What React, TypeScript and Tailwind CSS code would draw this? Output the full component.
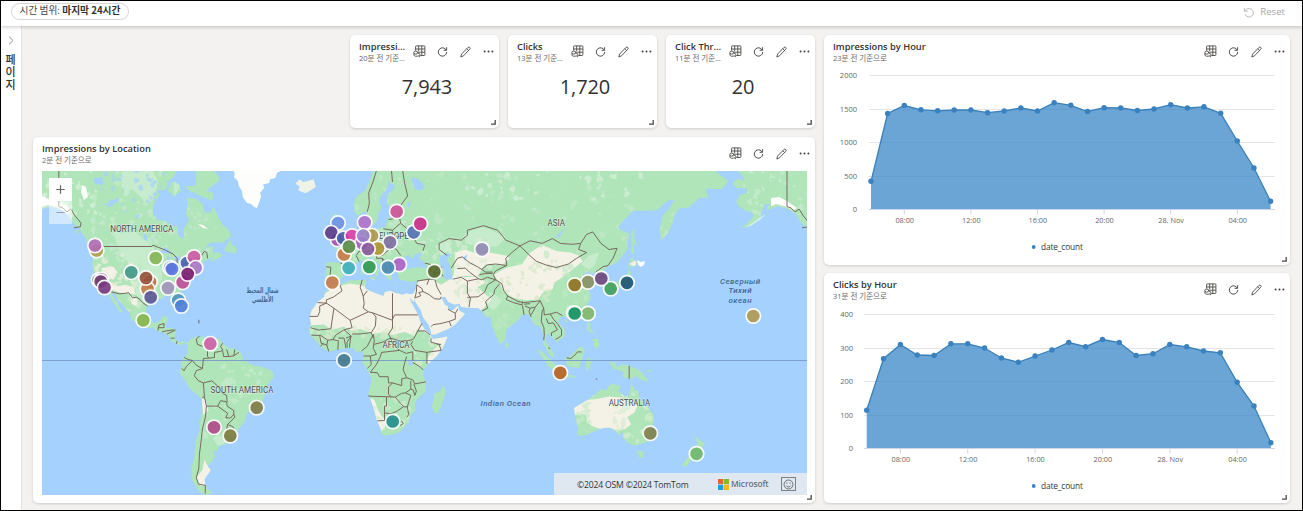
import React from "react";

/* ---------- shared icons ---------- */

function TableSearchIcon() {
  return (
    <svg width="13" height="13" viewBox="0 0 13 13" fill="none" stroke="#4a4846" strokeWidth="0.9">
      <path d="M2.6 5.6V1.6a.7.7 0 0 1 .7-.7h7.9a.7.7 0 0 1 .7.7v8a.9.9 0 0 1-.9.9H7.4" />
      <path d="M2.6 4h9.3M4 7.2h7.9M5.7.9v5.2M8.8.9v9.6" />
      <ellipse cx="2.7" cy="7.6" rx="1.9" ry="1.5" />
      <path d="M1 8v2c0 .8.8 1.2 1.8 1.2h2M4.6 7.8 7 9.2l-.4 2.6-1.8-1.4" />
    </svg>
  );
}

function RefreshIcon() {
  return (
    <svg width="11" height="11" viewBox="0 0 11 11" fill="none" stroke="#4a4846" strokeWidth="0.95">
      <path d="M9.3 4.2A4.2 4.2 0 1 0 9.7 6" />
      <path d="M9.6 1.2v3.1H6.6" />
    </svg>
  );
}

function PencilIcon() {
  return (
    <svg width="11" height="12" viewBox="0 0 11 12" fill="none" stroke="#4a4846" strokeWidth="0.9" strokeLinejoin="round">
      <path d="M7.9 1.5a1.25 1.25 0 0 1 1.8 0 1.25 1.25 0 0 1 0 1.8L3.4 9.9.8 11l.8-2.9z" />
      <path d="M6.8 2.7 8.6 4.5" />
    </svg>
  );
}

function MoreIcon() {
  return (
    <svg width="11" height="3" viewBox="0 0 11 3" fill="#3b3a39">
      <circle cx="1.6" cy="1.5" r="0.95" />
      <circle cx="5.5" cy="1.5" r="0.95" />
      <circle cx="9.4" cy="1.5" r="0.95" />
    </svg>
  );
}

function Tools() {
  return (
    <div className="flex h-[13px] shrink-0 items-center">
      <TableSearchIcon />
      <span className="ml-[11px]"><RefreshIcon /></span>
      <span className="ml-[12px]"><PencilIcon /></span>
      <span className="ml-[12px] flex"><MoreIcon /></span>
    </div>
  );
}

function Card({ title, note, className, children }: { title: string; note: string; className: string; children: React.ReactNode }) {
  return (
    <section className={"relative flex flex-col overflow-hidden rounded-[5px] bg-white shadow-[0_1px_3px_rgba(0,0,0,0.16)] " + className}>
      <header className="flex h-[34px] shrink-0 items-start justify-between pl-[9px] pr-[5px] pt-[5px]">
        <div className="min-w-0 flex-1 pr-[6px]">
          <h2 className="truncate font-['Open_Sans','Noto_Sans_CJK_KR',sans-serif] text-[9.3px] font-semibold leading-[13px] text-[#323130]">{title}</h2>
          <p className="truncate font-['Open_Sans','Noto_Sans_CJK_KR',sans-serif] text-[7.5px] leading-[11px] text-[#6a6866]">{note}</p>
        </div>
        <div className="pt-[5px]"><Tools /></div>
      </header>
      {children}
      <svg className="absolute bottom-[3px] right-[3px]" width="5" height="5" viewBox="0 0 5 5" fill="none" stroke="#4a4846" strokeWidth="1.3">
        <path d="M0 4.2h4.2V0" />
      </svg>
    </section>
  );
}

function Metric({ title, note, value }: { title: string; note: string; value: string }) {
  return (
    <Card title={title} note={note} className="h-[93px] w-[149px]">
      <div className="flex h-[35px] items-center justify-center pl-[5px] font-['Open_Sans',sans-serif] text-[20px] tracking-[-0.1px] text-[#323130]">{value}</div>
    </Card>
  );
}

/* ---------- area charts ---------- */

type ChartData = {
  top: number;
  x0: number;
  step: number;
  gridX: number;
  labelX: number;
  grid: [number, string][];
  points: number[];
};

const impressions: ChartData = {
  top: 69, x0: 871, step: 16.65, gridX: 869, labelX: 857,
  grid: [[75.5, "2000"], [109.5, "1500"], [142.5, "1000"], [176.5, "500"], [209.5, "0"]],
  points: [181.3, 113.5, 105.5, 109.8, 110.8, 110, 110, 112.7, 111, 108, 111, 102.7, 105.3, 111.5, 107.7, 108, 110.5, 109, 104.7, 108, 106.8, 113.3, 141, 168, 201.3],
};

const clicks: ChartData = {
  top: 307, x0: 866.7, step: 16.84, gridX: 864, labelX: 853,
  grid: [[314.5, "400"], [348.5, "300"], [381.5, "200"], [415.5, "100"], [448.5, "0"]],
  points: [410.3, 358.7, 344.5, 355, 355.5, 343.8, 343.8, 348, 358, 362.3, 356, 350, 342.5, 346.7, 339.5, 342.5, 355.5, 353.7, 344.5, 346.8, 351, 352.8, 382.3, 406, 442.7],
};

const hours = ["08:00", "12:00", "16:00", "20:00", "28. Nov", "04:00"];

function AreaChart({ data }: { data: ChartData }) {
  const pts = data.points.map((y, i) => [data.x0 + i * data.step, y]);
  const line = pts.map((p) => p[0].toFixed(1) + "," + p[1]).join(" ");
  const base = data.grid[4][0];
  const legendY = base + 37.5;
  return (
    <svg width="466" height="190" viewBox={`824 ${data.top} 466 190`} className="block font-['Open_Sans',sans-serif]">
      {data.grid.map(([y, label]) => (
        <g key={label}>
          <path d={`M${data.gridX} ${y}H1275`} stroke="#e4e4e6" strokeWidth="1" />
          <text x={data.labelX} y={y + 2.7} fontSize="7.5" fill="#666" textAnchor="end">{label}</text>
        </g>
      ))}
      <polygon points={`${pts[0][0]},${base} ${line} ${pts[24][0]},${base}`} fill="#3a87c8" fillOpacity="0.75" />
      <path d={`M${data.gridX} ${base}H1275`} stroke="#ccd6eb" strokeWidth="1" />
      <polyline points={line} fill="none" stroke="#3a80b8" strokeWidth="1.3" />
      {pts.map(([x, y]) => <circle key={x} cx={x} cy={y} r="2.7" fill="#3a82bf" />)}
      {hours.map((h, i) => {
        const x = data.x0 + (2 + 4 * i) * data.step;
        return (
          <g key={h}>
            <path d={`M${x} ${base}v5`} stroke="#ccd6eb" strokeWidth="1" />
            <text x={x + 0.4} y={base + 13} fontSize="7.3" fill="#666" textAnchor="middle">{h}</text>
          </g>
        );
      })}
      <circle cx="1033.7" cy={legendY} r="1.9" fill="#3a82bf" />
      <text x="1041" y={legendY + 2.9} fontSize="8.3" fill="#333" textLength="42">date_count</text>
    </svg>
  );
}

/* ---------- world map (Web Mercator) ---------- */

const K = 115.9;
function project(lon: number, lat: number): [number, number] {
  const y = Math.log(Math.tan(Math.PI / 4 + (lat * Math.PI) / 360));
  return [344 + (lon * K * Math.PI) / 180, 360.5 - K * y];
}
function trace(coords: string, shift = 0): string {
  return coords
    .trim()
    .split(/\s+/)
    .map((pair) => {
      const [a, b] = pair.split(",").map(Number);
      const [x, y] = project(a + shift, b);
      return x.toFixed(1) + "," + y.toFixed(1);
    })
    .join(" ");
}

const northAmerica =
  "-166,68.3 -163,67 -162,66 -165,66.5 -168,65.6 -166,64.5 -161,64.5 -161,63.5 -164.5,63 -166,61.5 -165,60.5 -162,59.5 -158.5,58.8 -157.5,58.5 -158,57.5 -161,55.8 -164.8,54.6 -162,55 -158,56 -154,58 -153.5,59.3 -151.8,60.8 -149.5,61 -151.5,59.2 -148,60 -145,60.4 -142,60 -139.5,59.5 -137,58.5 -135,57 -133,55.5 -130.5,54.5 -130,53.5 -128,51.8 -127,50.8 -124.5,49.6 -123,49 -122.5,47.5 -124.6,48.3 -124,46 -124.5,43 -124,40.5 -123.7,39 -122.5,37.5 -121.8,36.3 -120.6,34.6 -118.4,33.8 -117.2,32.6 -116,30.5 -114.2,28 -115,27.7 -113,26.5 -112,24.7 -110,22.9 -109.5,23.4 -111,25.5 -112.5,28 -114.7,31 -114.5,31.8 -113,31 -112,29 -110.5,27.5 -109,26 -108,25 -106,23 -105.3,21.5 -105.5,20.3 -104,19 -102,18 -99,16.6 -96.5,15.7 -94.5,16.2 -92.3,14.5 -90,13.7 -87.7,13 -86,11.3 -85.7,10 -83.7,8.7 -82.9,8.2 -81,7.6 -80,7.5 -79.5,8.9 -78.2,8 -77.5,8.6 -79.5,9.5 -81,8.8 -83,9.8 -83.7,11 -83.5,13 -83.2,15 -85,15.9 -88,15.8 -88.5,17 -87.5,19 -87,21.4 -90,21.2 -90.6,19.5 -92,18.6 -94.5,18.2 -96,19.2 -97.5,21.5 -97.8,24 -97.2,26 -97,28 -95,29 -93,29.7 -90.5,29.1 -89,29.2 -89.5,30.3 -86.5,30.4 -84.3,30 -82.8,28.8 -82.6,27.5 -81.7,25.9 -80.3,25.3 -80,27 -81.2,29.5 -81.2,31.5 -79.5,33 -77.5,34.2 -75.7,35.3 -76,37 -75,38.5 -74,40 -72,41.1 -70,41.7 -70.7,43 -69,44 -67,44.7 -65,45.4 -66,43.6 -63.5,44.6 -61,45.4 -60,46 -61.5,46.8 -64.5,47 -65,48 -64.3,49 -67,49 -70,47 -67,49.8 -65,50.3 -60,50.2 -57,51.5 -55.8,52.5 -57.5,54.5 -60,55.5 -62,57.5 -64.5,60.3 -66,58.8 -69,58.8 -70,61 -73,62.2 -77.8,62.4 -77.5,60 -78.4,58.5 -76.6,57 -78.5,55 -79.5,54.5 -79,52 -80,51.2 -82.2,53 -82.3,55 -85,55.3 -88,56.5 -92.5,57 -94.7,58.8 -94,61 -91,63 -93,64 -88,64.2 -86.5,66 -84,67 -82,68.5 -82,69.5 -85,69.5 -88,68 -92,69 -96,68 -100,67.9 -108,68 -115,68 -122,70 -141,70 -156,71";

const land: string[] = [
  "-65,61.8 -71,62.8 -77.5,64.3 -78,65 -73.5,65 -73,67.5 -76,69 -68,70 -67,69 -62,67 -61.5,66 -65,65 -68,64 -64.5,63.5",
  "-87,64 -84,62.7 -80.5,64 -82,65.5 -85.5,65.8",
  "-59.3,47.7 -57,50.5 -55.5,51.5 -56,50 -53,48.5 -53.5,46.7 -56,47",
  "-128,50.8 -125,50 -123.5,48.5 -126,49.3",
  "-133,54 -131.5,54 -131.5,52.5",
  "-77.5,8.6 -75.5,10.7 -74,11.2 -72,12.2 -71.5,10.8 -70,12 -68,10.7 -64,10.3 -62,10.7 -60,8.5 -57,6 -54,5.8 -51.5,4.3 -50,1.8 -50,0 -48,-.7 -44.5,-2.5 -41.5,-3 -38.5,-3.8 -35.3,-5.2 -34.8,-8 -37,-11 -39,-13.5 -39.2,-17.5 -40.8,-21 -42,-23 -45,-23.6 -48.5,-25.5 -48.8,-28.5 -51,-31 -53.5,-34 -56,-34.9 -58.4,-34 -57,-36.3 -58,-38 -62,-39 -62.3,-40.8 -65,-41 -63.7,-42.5 -65.3,-44.8 -67.5,-46 -65.8,-47.5 -69,-50.5 -68.4,-52.4 -65.2,-54.7 -68.5,-55.3 -72,-54 -75,-51 -75.5,-47 -74,-43 -73.5,-39 -73.5,-37 -71.7,-33 -71.5,-30 -70.3,-25 -70.2,-19 -71.5,-17.5 -76.2,-14 -78.5,-10 -81.2,-6 -81.3,-4.5 -80,-3 -81,-2 -80,0.5 -78.8,1.7 -77.3,4 -77.5,6.5",
  "20,70 14.5,68 12.5,66 10.5,64 6,62.5 5,61 5.3,59 7,58 10.5,59.2 11.5,58.5 12.8,56 14.2,55.5 16.3,56.5 17,58.8 18.8,60 17.3,61.5 18,62.7 21.5,64.5 22,65.8 25,65.2 25,64.5 21.5,63 21.3,61 23,60 28,60.6 30,60 28,59.6 23.5,59.2 24,57.5 22,57.6 21,56 20,54.7 18.5,54.8 14.2,54 11,54 10.7,57.6 8.2,57 8.6,54 5,53.3 3.3,51.3 1.6,50.5 0,49.5 -1.8,49.6 -2,48.7 -4.7,48.4 -2,47 -1.2,44.5 -1.8,43.4 -8,43.7 -9.2,43 -8.8,40 -9.4,38.7 -8.9,37 -6.5,36.9 -5.5,36.1 -2,36.8 -0.5,38 0,39.5 3.2,41.8 3.2,43.2 6,43.1 8.8,44.4 10.3,43 12.3,41.7 15,40 16,38 17,39 16.8,40.5 18.4,40 16,41.8 13.5,43.6 12.3,45.3 13.8,45.2 15.5,43.8 19.4,41.8 19.5,40 21.5,37.5 23,36.6 24,38 22.8,40 24,40.6 26,40.8 26.5,39.5 27.3,37 30.5,36.5 34,36.2 36,36.7 35.8,34 34.3,31.3 32.5,31.1 31,31.5 29,30.9 25,31.7 23,32.6 20.2,32 19.5,30.3 15.5,31.5 11,33.2 10.2,34.3 11,37 8,36.9 3,36.8 -1.5,35.2 -5.5,35.8 -7,33.8 -9.6,32 -9.7,30 -13,27.7 -16,24 -17,21 -16.3,18 -17.4,14.7 -16.7,12.5 -13.3,9 -12,7.2 -7.7,4.4 -4,5.2 1,6 4.3,6.3 6,4.3 8.7,4.6 9.7,3 9.3,0 9,-1 12,-5 13.7,-10 12,-16 14.5,-22.5 16.3,-28.5 18.2,-32 18.4,-34 20,-34.8 25.7,-34 28,-33 32,-29 32.8,-26 35.5,-24 35,-20.5 37,-18 40.6,-15 40.5,-10.5 39,-7 39.5,-4.5 41.5,-1.8 46,2.3 49,6.5 51.2,11.8 48,11.2 44,10.5 43,12 40,15 38,18 37,21 35.5,24 33,28 32.5,29.8 34.3,27.8 35,29.3 35,28.2 38,24 39,21 42,17 43.3,12.7 45,12.8 52,15.6 55,17.5 58,20.5 59.8,22.5 57,24 56.3,26.2 54,24.2 51.5,24.2 51.3,26 50,26.5 48,29.8 50,30 51.5,27.8 54.5,26.6 57,27 58,25.5 61.5,25.2 66.5,25 68.5,23.3 70,21 72.5,21 73,17 74.8,13 76.3,9.5 77.5,8.1 79.8,10.3 80.2,15 82.5,16.8 86.5,20 88,21.8 91,22.5 92.3,20.5 94.3,17 97,16.8 98.5,13 98.5,8.5 100.3,5.5 101.5,2.7 103.8,1.3 103.4,4 101.8,6.8 99.5,9.5 100.2,13.3 102.5,12 105,9 106.8,10.3 109.3,12 108.8,15.3 106,18.5 107,21 110,21.3 114,22.4 117,23.7 119.8,26 121.8,29 121.8,31 120,34 119.3,35 122.5,37 119,37.3 117.8,39 121.8,40.5 121.5,39 124.5,40 125,38 126.5,36.5 126.5,34.5 129.3,35.5 129.3,37 127.5,39.5 130,42 135,43.5 140,48 140.5,51 141,53 137,54 135.3,54.8 138,56.5 143,59.3 151,59.3 155,59.5 160,61.7 163.5,62 161,60 157.5,58 156,54 156.7,51 160,53 162.5,56 163.3,58 166,60 170,60 176,62.4 180,62.4 179,64.5 183,64.3 187,64.4 190,66 185,67.5 180,69 178,70",
  "-5.5,50 1.3,51.2 1.6,52.8 0,53.5 -2,56 -2,57.6 -5,58.6 -6,56.5 -3,54.5 -4.5,53 -5,52 -3,51.5",
  "-10,52 -6.3,52.2 -6,54 -7.5,55.3 -10,54",
  "8.3,39 9.7,39.2 9.5,42.8 8.5,42",
  "12.5,38 15.5,38.2 15,36.7",
  "23.5,35.5 26.3,35.2 25,34.9",
  "32.5,35 34.4,35.6 33.5,34.7",
  "49.3,-12 50.4,-15.5 48,-22 46.8,-25.2 44.5,-25 43.4,-22 44.3,-19.5 44.4,-16.3 47.5,-15",
  "79.8,9.6 81.8,7.5 80.5,6 79.8,7.5",
  "95.3,5.6 98,4.3 101,1.5 104,-1.5 106,-3.5 105.7,-5.9 102,-4 99,0 97,3",
  "105.3,-6.5 108.5,-6.7 114.5,-7.6 114.3,-8.6 108,-7.8",
  "109,1.6 111,1.5 114.5,4.8 117,7 119,5.2 117.8,1 116,-3.8 113,-3.2 110.3,-2.8",
  "119.5,0 120.5,1 125,1.5 121,.4 123,-1 121.5,-2 122.5,-4.8 121,-3 120.3,-5.5 119.4,-3.5",
  "120.5,18.5 122.2,18.3 121.6,15.8 124,12.7 122,13.8 120,14.8",
  "122,10 125.5,11 126.4,7.5 125,5.8 123,7.8 124,9",
  "131,-1 134,-.8 135,-3.3 138,-1.6 144.5,-3.9 147.8,-6.2 150.8,-10.5 147,-9.5 144,-7.7 142.5,-9.2 138,-8.3 138,-5.5 133,-4 132,-2.5",
  "149,-5.6 152,-4.2 151.5,-5.6",
  "113.7,-22.8 114.2,-26 115.8,-32 115,-34.3 118,-35 124,-33 128,-31.6 131.5,-31.5 134.5,-33 136,-34.8 137.7,-33 138.2,-35.6 140,-37.5 143.5,-38.8 147,-38 150,-37.3 151.3,-33.5 153.3,-29 153,-25.5 150.8,-23.3 149,-20.5 146.3,-18.9 145.3,-15 143.5,-14.2 142.3,-10.8 141.5,-13.5 140.8,-17.4 139,-17.4 135.7,-15 136.8,-12.2 133,-11.6 131,-12.2 129.5,-14.8 127,-14 124.5,-16.3 122.2,-18 119,-20",
  "144.8,-40.8 148.2,-40.9 147.8,-43.2 146,-43.4",
  "172.7,-34.5 175.5,-36.5 178.5,-37.8 177,-39.5 175.3,-41.6 173.8,-39.3 174.8,-37.5",
  "172.7,-40.7 174.2,-41.8 171,-44.7 169,-46.5 166.6,-46 170,-43.2",
  "130,33 132,33.8 136,33.6 139,35 140.8,35.7 141.8,39.5 140.8,41.4 139.8,39 137,37 133,35.6 131,34.5 130,31.5",
  "140.2,41.6 143.2,42 145.3,43.4 141.9,45.4 141,43.3",
  "142,46.5 143.5,46.8 142.8,50 144.5,49 143,54.2 142,53.5",
  "120.2,23 121.8,25.2 121,22.2",
  "108.7,19.2 110.8,20 110,18.3",
];

const greenland = "-43,60 -44.5,60.2 -46,61 -48,61.2 -50,62.5 -50.5,64 -52,65 -52.5,66 -54.5,66.8 -54,67.3 -56,70 -22,70 -26,68.5 -30,68.2 -33,67.6 -34,66.6 -36.5,66.4 -37,65.6 -40,65.3 -39.5,64.6 -41.5,63.5 -41,62.6";
const iceland = "-22.5,64 -19,63.4 -16,64.2 -14,64.8 -15,66.3 -18,66 -20,65.8 -22,66.3 -24,65.5 -22,64.9";

const water: string[] = [
  "28,42 31,41.2 36,41.8 41.5,41.5 39,44 37,45 39,47 35,46.3 33.5,44.8 32,46.2 30,45.5 28.5,43.5",
  "47.5,45.5 47.7,42.5 50,40 49,37.5 53.8,37 53,40 52.5,42 51,44.5 53,46.7 49.5,46.5",
  "33,66.8 35,64.3 38,64 40,65 37,66.3",
  "103.8,51.5 107,52.2 109.8,55.5 108,54",
  "-92,46.7 -88,48.8 -84.8,46.6 -88,46.8",
  "-87.8,42 -87.5,45 -86,45.8 -86.3,42",
  "-84,46 -80.5,45.5 -82,43.3 -83.5,44",
  "-83,41.8 -79,42.8 -81.5,41.6",
  "-99,53.5 -97.5,52 -97,50.5 -98.8,51.5",
  "-117,61 -111,62.5 -112,61.3",
  "-124,66.5 -119,66.8 -120,65.3 -123,65.4",
  "-103,58 -101,58.5 -102,57",
  "-108,59.5 -110.5,59 -107,59.2",
  "31.8,.3 34,.2 33.8,-2.5 32,-2.4",
  "59,45.5 61,46.3 60,44",
  "31,61 33,61.5 32,59.9",
];

const deserts: string[] = [
  "-18,29 -10,31 -5,34 3,35.5 10,34.5 12,38 20,35 35,33 37,36.5 44,37 48,35 52,37 54,38.5 60,38 66,38.5 70,36 66,34 70,31 73,29 69,25 60,20 52,12 44,11 39,14.5 36,15 35,12 30,14 24,12.5 20,14 14,13 8,15.5 4,14.5 0,16.5 -6,15 -10,17.5 -18,17",
  "42,11 52,13 51,5 42,-2.5 40.5,0 43,4 47,8 43,9",
  "54.5,41 55,47 60,48 66,46.5 72,47 80,46 82,45 78,42.5 70,43 66,38.5 60,38.5 54,38",
  "74,39 80,41.5 88,43 92,47 98,49.5 105,47.5 112,47 116,46 118,44 113,41 108,38 104,36 103,33 99,32.5 96,29 90,28.5 84,29.5 79,32 77,35.5",
  "12,-18 15,-19 17,-24 19,-27 21,-28 20,-32 18,-33 14,-28",
  "-73,-50 -70,-47.5 -69,-44 -67.5,-46 -65.5,-48 -69,-52.5 -71,-52.5",
  "-70.5,-17.5 -68,-20 -67,-24 -69.5,-26",
  "113.5,-22 116,-20.5 121,-19 126,-18.5 131,-17.5 137,-18 141,-21 142,-19 145,-22 143.5,-25 140,-27 142,-30 139,-32 135,-32.5 131,-31.5 127,-32 123,-31 120,-29 120,-26 117,-25.5 114,-26",
  "-120,41.5 -114,42 -112,40 -114,37 -117,38 -119,39",
  "-117,36 -112,34.5 -108,35 -104,34 -103,31 -107,31.5 -110,31.5 -115,33",
  "-106,31 -102,29 -102,25.5 -105,27",
  "141,43 144.5,44.5 144,42",
];

const paleAreas: string[] = [
  "-114,54 -110,53 -103,53.5 -97,50 -94,48.5 -92,44 -90,41 -90,37 -97,33 -99,28 -103,31 -103,36 -105,41 -108,45 -112,49",
  "-110,64.5 -104,64 -97,61 -94,62 -92,66 -96,69 -110,69",
  "-152,62 -148,63.5 -146,61.5 -140,62.5 -136,60 -140,59 -150,59",
  "60,53 68,55 75,53.5 80,52 76,49 68,49 60,50",
  "45,49 50,51 53,48.5 48,46",
  "72,32 75,31 78,28 74,24 71,26",
  "117,43 121,46 126,47 124,42.5 121,41",
  "-62,-34 -58,-37.5 -62,-39 -65,-36",
];

const borders: string[] = [
  "-123,49 -95,49 -94.5,49.4 -89,48 -84.5,46.5 -82.5,45 -82.5,42 -79,43 -76.5,44 -75,45 -71,45 -70,46.5 -69,47.4 -67.8,47 -67.5,45",
  "-117,32.5 -111,31.3 -108,31.5 -106.5,31.8 -104.5,29.6 -102.5,29.8 -101,29 -99.5,27.5 -97.2,26",
  "-92,14.6 -91.5,17.3 -89,18 -89,16 -92,16 M -90,14 -88,14.5 -84,15 M -87.5,13 -84,14.5 -83.2,15 M -85.7,11 -83.7,11 M -82.9,8.2 -82.5,9.5 M -71.8,19.7 -71.7,18",
  "-71.5,12 -73,10.5 -72.5,8 -70,7 -67.5,6 -67.5,2 -66.8,1.2 -64,1.5 -64,4 -61,4.5 -60,5.2 -61,7 -60,8.5",
  "-60,5 -59.5,2 -57,2 -58,5.5 M -57,2 -54.5,2.3 -52,4 M -54.5,2.3 -54,5.5",
  "-66.8,1.2 -69.5,1 -70,-4 -73,-2.3 -75,0 -77,0.5 -79,1.5",
  "-75,0 -78,-3 -79,-5 -80.3,-4",
  "-70,-4 -73,-5 -74,-7.5 -72,-10 -69.5,-11 -69,-17.5 -70.3,-18.3",
  "-69.5,-11 -65.3,-10 -62,-13 -60,-16 -58,-17 -57.8,-20",
  "-69,-17.5 -68,-22 -68.5,-27 -70,-32 -70.5,-36 -71.5,-42 -71.8,-47 -73,-50 -72,-52 -68.5,-52.4 -68.6,-54.8",
  "-68,-22 -65,-22 -62.5,-22 -61,-19.5 -58,-20 -57.8,-22 -54.5,-24 -54.5,-25.6 -56,-27.3 -58.5,-27.3 -57.5,-25.3 -62.5,-22",
  "-54.5,-25.6 -54,-27 -57.6,-30.2 -58.2,-33 M -57.6,-30.2 -55,-31 -53.5,-33.5",
  "11.5,59 12.5,61 12.2,63.5 14.5,66 16,68 20,69 M 24,65.8 23.5,68 21,69 M 30,70 29,68 30,65.5 31.5,62.8 28,60.6",
  "28,59.5 27.5,57.5 28,56 31,54.5 31.5,53 34,52 36,50 40,49.5 39,47.5 M 27.5,57.5 22,57 M 28,56 24,54 19.5,54.4 M 24,54 23.5,52 24,50.5 22.5,49 26,48 28,46 M 23.5,51.7 31.5,52.5",
  "14.3,54 15,51 12.5,50 13.8,48.7 17,48.5 22.5,49 M 15,51 18.5,49.8 22.5,49 M 6.5,53.3 6,50 8,49 7.6,47.5 10,47.4 13,47.5 13.8,48.7 M 3,51 6,49.5 M 7.6,47.5 6,46 7.5,43.8 M 13,46.5 16.5,46.5 19,46 22,47.8 M 16.5,46.5 16,45 19,45 20.5,44 22.5,43.5 28,43.8 M 22.5,43.5 23,41.5 26,41.5 M 19,45 19.5,43 21,41 20,39.8",
  "-8.8,42 -6.5,41.8 -7,38 -7.3,37.2 M -1.8,43.3 3,42.4",
  "41.5,41.6 43.5,40.5 44.5,39.8 46.5,41.8 48.5,41.8 M 44.5,39.8 48,39.5 49,38.4 M 36,36.5 42,37.3 44.8,37.2 44.5,39.8 M 40,43.3 44,42.6 47.8,41.5",
  "51,46 47,48 47,50 52,51.5 58,51 61,52.5 61,54 69,55.3 76,54 80,51 87,49.2 92,50.8 98,50 103,51.5 107,50 113,49.7 117,50 120,52.8 123,53.5 127,50 131,48 135,48.4 133,45 131,43 130.5,42.4",
  "87,49.2 91,46.5 95,44 100,42.6 105,41.7 111,43 115,45 120,47 116,48 117,50",
  "87,49.2 83,47 80,45 80.5,42.5 75,40.5 73.8,39 75,37 78,35.5 79,32.5 81,30.3 86,28 89,27.5 92,27.8 97,28.3 98.7,25 99,22 102,22.4 105,23.2 108,21.6",
  "53,41.5 56,45 58.5,45.5 62,43.5 66,42 68,41 71,42.7 75,43 80,42.5 M 56,41.3 60,41.5 62,40 66.5,37.4 68,37 71,38 75,37 M 68,41 70,40 73.5,40 M 67,39 70,39.5 73.5,39.5 M 54,37.3 58,38 61,36.5 66.5,37.4",
  "61,36.5 61,31.5 62.5,29.5 61.8,25.5 M 61,29.8 66.3,30 69.5,32 71,35 75,37 M 68.3,23.8 71,25 70,28 74,31 74.5,33 77,35.5",
  "81,30.3 80.2,28.8 84,27.4 88,26.5 88.2,28 M 89,26.8 92,27 M 88.2,26.3 89,22 M 89.5,26 92,25 91.5,23.5 92.5,21 M 92,25 94.5,25.5 97,28.2 M 92.5,22 94.5,25.3",
  "98.7,25 98,23.8 97.5,19 98.8,16 99,12.5 98.7,10 M 100,20.3 101,18 103.5,18.3 105.5,15 102.5,13.5 102.6,12 M 102,22.4 103.5,20 105.5,18 107.5,15 107.5,12.3 105.8,11 104.5,10.4 M 101,6.3 102,5.8 M 124.5,40 128,42 130.5,42.4 M 126.5,38 128.5,38.5",
  "35.8,33 36,35 38.5,33.5 39,32.2 42,31 44.7,29.2 47.5,29 48,30 M 36,33.3 35.5,31 35,29.5 38,30.5 37,31.8 39,32.2 M 41,35 42,37.3 M 45,37 46,34 48,31 M 43,16.5 44,17.4 48,18 52,19 53,16.7 M 52,19 55,20 55,22.7 51.5,24.5 M 55,22.7 56.3,24.7",
  "-2,35 -1,32.5 -5,30 -8.7,28.7 -8.7,27.3 -13,27.5 M -8.7,27.3 -12,26 -12,23.5 -13,21.3 -17,21.3 M -8.7,27.3 -5,25 -6.5,15.5 -11.5,15 -12.3,14.8 -16.5,16 M -5,25 3,19.5 4,16 M 9,37 8,34 9.5,30.3 10,27 9.5,25 12,23.4 14,23 15.8,21 15.5,16.8 13.5,13.7 M 9.5,30.3 11.5,32.5 M 3,19.5 12,23.4 M 14,23 24,19.5 24,31.5 M 25,22 36.5,22 M 24,20 25,22 M 24,19.5 24,15.8 22,13 23,11 M 4,16 0,15 -4,12.5 -5.5,10.3 M 4,13 8,13 13.5,13.7 14.5,11 M 0,15 3.5,12 1,11",
  "-12,12.3 -11.3,8.5 -8.5,7.6 -8,10 -11.5,12.3 -16,12.4 M -11.5,7 -10.3,8.5 M -8.5,7.6 -7.5,4.5 M -5.5,10.3 -8,10 M -5.5,10.3 -2.8,9.7 -3,5.2 M -2.8,11 0,11 1,6.1 M 1.6,6.3 1.5,9 3.5,12 M 2.7,6.4 3,9.5 3.5,12 M 8.7,4.8 11.5,7 14.5,12.8 15,10 14.5,6 16,3 13,2.2 9.7,2.2 M 15,8 19,9 23,11 24,8.5 27.5,5 23,4.5 18.6,4 18,2 M 23,11 28,9.5 33,10 34.5,10.7 36.5,14.5 38.5,18 M 36.5,14.5 40,14.5 42.5,12.5 M 34,9.5 33,8 35,5 41,4 42,4.2 M 27.5,5 30.8,3.5 34,4.3 M 34,4.3 34,0 M 41,4 41,-1.7 M 34,-1 37.5,-3 39.2,-4.7 M 31,2 30,-1 29.2,-4.5 31,-8.5 34,-9.5 35,-11.5 40.4,-10.5",
  "13,2.2 13.5,-2 11.5,-3.9 M 18,2 16,-2 13,-5.8 16.5,-6 17.5,-8 21.8,-8 22,-11 24,-11 28.5,-12.3 28.5,-9 31,-8.5 M 24,-11 22,-13 22,-16.5 23.5,-17.7 14,-17.4 12,-17.3 M 21,-17.8 21,-22 20,-22 20,-28.4 16.5,-28.6 M 20,-25 23,-25.5 25.8,-24.5 29.5,-22.2 31.3,-22.4 33,-17 30.4,-15.8 28.5,-16 25.3,-17.8 28,-20.8 29.5,-22.2 M 31.3,-22.4 32,-25.8 31,-27 M 25.3,-17.8 23.5,-17.7 M 30.4,-15.8 33,-14 33,-10 M 34.5,-11.5 35.8,-15 35,-17 34.3,-14.5 33,-14 M 27,-29.7 28.5,-28.7 29.3,-29.7 28,-30.5 27,-29.7",
  "46,8 48,8 M 43,11 43,9 47,8 48,5 42,4.2",
  "110,1.3 112,1 114,2.5 115.5,4.3 117.5,4.2 M 141,-2.6 141,-9 M 124.5,-9 125.2,-9.2",
];

const alaskaBorder = "-141,70 -141,60.3 -139,60 -137,59 -135,59.7 -133,58 -130,56 -130.3,55 -133.5,54.7";

function borderPath(line: string): string {
  return line
    .split(" M ")
    .map((part) => "M" + trace(part).replace(/ /g, "L"))
    .join("");
}

/* Small deterministic patches giving the vegetation its mottled texture. */
const patchZones: [number, number, number, number, number, string][] = [
  [-148, -122, 58, 68, 36, "#d8f2dc"], [-124, -86, 42, 68, 100, "#c9ecd0"], [-122, -86, 60, 68, 34, "#a6d2fb"], [-90, -60, 46, 62, 26, "#c4e8cf"],
  [-124, -103, 32, 46, 30, "#eeeede"], [-104, -84, 34, 50, 30, "#c2ecc6"], [-112, -98, 18, 30, 14, "#d3edcf"],
  [-60, -40, -20, -2, 26, "#c9edcf"], [-70, -55, -38, -18, 14, "#c9edcf"],
  [5, 30, 45, 68, 50, "#c6ebcc"], [35, 170, 50, 68, 80, "#c3e9cb"], [60, 150, 62, 68, 34, "#d6efdc"], [25, 60, 44, 52, 20, "#d5eed6"],
  [50, 72, 40, 52, 30, "#d9eed4"], [54, 72, 28, 37, 18, "#d5ebcd"], [78, 104, 28, 44, 30, "#d6e9c8"], [96, 118, 40, 50, 14, "#c5e9c4"],
  [-16, 38, 10, 16, 44, "#d9ebcd"], [14, 34, -32, -18, 22, "#d5edd2"], [34, 48, -2, 12, 14, "#dcedd0"],
  [114, 124, -32, -16, 16, "#c9ecc9"], [132, 152, -37, -15, 44, "#d8edd0"], [70, 85, 14, 30, 16, "#c0e9c4"], [105, 122, 24, 42, 20, "#c0e9c8"],
  [-165, -133, 57, 68, 30, "#dcf3e0"], [195, 228, 58, 68, 36, "#c9edd2"],
];

function makePatches() {
  let seed = 71;
  const rnd = () => {
    seed = (seed * 16807) % 2147483647;
    return seed / 2147483647;
  };
  const out: { d: string; fill: string }[] = [];
  for (const [x0, x1, y0, y1, n, fill] of patchZones) {
    for (let i = 0; i < n; i++) {
      const [cx, cy] = project(x0 + rnd() * (x1 - x0), y0 + rnd() * (y1 - y0));
      const r = 1 + rnd() * 2.8;
      const pts: string[] = [];
      for (let a = 0; a < 8; a++) {
        const q = r * (0.4 + rnd() * 0.9);
        pts.push((cx + q * Math.cos(a * 0.785)).toFixed(1) + "," + (cy + q * Math.sin(a * 0.785)).toFixed(1));
      }
      out.push({ d: pts.join(" "), fill });
    }
  }
  return out;
}
const patches = makePatches();

const markers: [number, number, string][] = [
  [96.7, 250.5, "#b09a50"], [95, 245.5, "#b06db8"], [98.7, 280, "#6b8060"], [101.5, 279.5, "#7c3f7e"], [100.7, 281.5, "#6f4272"], [104.5, 287.5, "#7a3a80"],
  [155.7, 258, "#84b556"], [131.3, 272.3, "#43988c"], [150, 282, "#b86f45"], [147.5, 289, "#c07a45"], [146, 278, "#935038"], [150.7, 297.3, "#5d5596"],
  [143.3, 320.3, "#84b54a"], [168, 288, "#a093bb"], [178.3, 300.3, "#4e93b8"], [181.3, 306, "#5080d8"], [170, 267.7, "#7a90e0"], [172, 269, "#5a74dd"],
  [187, 263, "#4a62b0"], [194, 257, "#cf5aa5"], [195.7, 267.7, "#a878c8"], [182.7, 282.3, "#c04c98"], [187.7, 274, "#7a1a72"],
  [210.3, 343.7, "#cf5fa8"], [256.7, 407.7, "#7f7a45"], [214, 427.3, "#b0478a"], [230.3, 435.7, "#7f7a3c"],
  [338, 223, "#7090e8"], [337.5, 239.5, "#b04ab0"], [331.3, 232.7, "#5a3a8c"], [343.3, 238.3, "#4560a8"], [352, 236, "#e03ba8"], [364.7, 222.3, "#b070cc"],
  [396.7, 211.5, "#cf5298"], [413.7, 232.3, "#5470b5"], [420.3, 223.8, "#cc2a88"], [372, 235.7, "#b09a50"], [362, 243, "#b060c8"], [363.3, 235.7, "#9a80c8"],
  [390, 242.3, "#8070a5"], [378, 248.5, "#b09535"], [368, 249, "#8a5a9a"], [344, 254.5, "#c87a45"], [349, 246.7, "#5c8c48"], [348.7, 268, "#3eb0bb"],
  [369.3, 267, "#2f9850"], [399.3, 264.5, "#b060c8"], [388, 267.5, "#4a88b5"], [434.3, 271.5, "#56682c"], [482, 249.3, "#9488b5"], [332.3, 282.5, "#c87a4a"],
  [344, 360.3, "#45788c"], [392.7, 421.5, "#208f8c"],
  [588, 282, "#8a9060"], [574.7, 285, "#907020"], [610.7, 288.7, "#40a058"], [601.3, 278.5, "#6e4580"], [627, 282.8, "#1c5270"], [588, 313.5, "#80b868"],
  [573.8, 313, "#209868"], [574.7, 313.5, "#209868"], [753.3, 316, "#b09a50"], [560.3, 372.8, "#b8601c"], [650.3, 433.3, "#7f8048"], [696.5, 453.8, "#70b868"],
];

function WorldMap() {
  return (
    <svg width="765" height="324" viewBox="42 171 765 324" className="block shrink-0">
      <defs>
        <clipPath id="land">
          <polygon points={trace(northAmerica)} />
          <polygon points={trace(northAmerica, 360)} />
          {land.map((p) => <polygon key={p} points={trace(p)} />)}
        </clipPath>
      </defs>
      <rect x="42" y="171" width="765" height="324" fill="#a4d1ff" />
      <g clipPath="url(#land)">
        <rect x="42" y="171" width="765" height="324" fill="#b0e5b8" />
        {paleAreas.map((p) => <polygon key={p} points={trace(p)} fill="#c6ecce" />)}
        {deserts.map((p) => <polygon key={p} points={trace(p)} fill="#f4f1e6" />)}
        <g opacity="0.7">
          {patches.map((p, i) => <polygon key={i} points={p.d} fill={p.fill} />)}
        </g>
      </g>
      <polygon points={trace("-110,67 -107,66 -106,63.5 -108,62.5")} fill="#c6ecce" />
      <polygon points={trace("-84,62.5 -81,65 -84,66")} fill="#c6ecce" />
      <g fill="#fdfdfb">
        <polygon points={trace(greenland)} />
        <polygon points="82,185 86,187 88,197 84,200 81,192" />
        <polygon points="42,196 50,200 58,202 66,205 71,212 67,214 58,207 48,205 42,207" />
        <polygon points="771,198 779,197 787,201 797,208 794,210 784,206 776,204 771,206" />
        <path d="M637 260l4 2 4-1-1 4-3 2-3-2z" />
        <path d="M198 224l5 1 5 4-5-1z" />
      </g>
      <polygon points={trace(iceland)} fill="#eef3e6" />
      {water.map((p) => <polygon key={p} points={trace(p)} fill="#a4d1ff" />)}
      <path d="M744 228l8-5 8-6 6-3-6 6-9 6z" fill="#cfeee0" />
      <path d="M42 360.5H807" stroke="#7d9fca" strokeWidth="1" />
      <g fill="none" stroke="#75635b" strokeWidth="0.95" strokeLinejoin="round">
        {borders.map((b) => <path key={b} d={borderPath(b)} />)}
        <polyline points={trace(alaskaBorder)} />
        <polyline points={trace(alaskaBorder, 360)} />
      </g>
      <g className="font-[family-name:Roboto,sans-serif]" fontSize="8.6" fill="#4e4a52" stroke="#ffffff" strokeOpacity="0.5" strokeWidth="1.2" paintOrder="stroke" textAnchor="middle">
        <text x="141.7" y="232" textLength="63" lengthAdjust="spacingAndGlyphs">NORTH AMERICA</text>
        <text x="242" y="393.4" textLength="63" lengthAdjust="spacingAndGlyphs">SOUTH AMERICA</text>
        <text x="394" y="239.4" textLength="30" lengthAdjust="spacingAndGlyphs">EUROPE</text>
        <text x="396" y="348.4" textLength="27" lengthAdjust="spacingAndGlyphs">AFRICA</text>
        <text x="556.3" y="226.4" textLength="17.5" lengthAdjust="spacingAndGlyphs">ASIA</text>
        <text x="629.5" y="406" textLength="41.5" lengthAdjust="spacingAndGlyphs">AUSTRALIA</text>
      </g>
      <g className="font-[family-name:Roboto,sans-serif]" fontSize="7.9" fontStyle="italic" fontWeight="500" fill="#45688f" textAnchor="middle">
        <text x="505.5" y="406" textLength="50">Indian Ocean</text>
        <text x="740" y="283.6" textLength="40">Северный</text>
        <text x="740" y="293.1" textLength="23">Тихий</text>
        <text x="740" y="302.6" textLength="23">океан</text>
      </g>
      <g className="font-['DejaVu_Sans',sans-serif]" fontSize="8" fontWeight="700" fill="#45688f" textAnchor="middle">
        <text x="262.5" y="293" textLength="32" lengthAdjust="spacingAndGlyphs">شمال المحيط</text>
        <text x="262.5" y="302" textLength="21" lengthAdjust="spacingAndGlyphs">الأطلسي</text>
      </g>
      {markers.map(([x, y, c], i) => (
        <circle key={i} cx={x} cy={y} r="7.2" fill={c} fillOpacity="0.9" stroke="#fff" strokeOpacity="0.92" strokeWidth="1.7" />
      ))}
    </svg>
  );
}

function MapPanel() {
  return (
    <div className="relative ml-[9px] h-[324px] w-[765px] overflow-hidden">
      <WorldMap />
      <div className="absolute left-[7px] top-[7px] flex w-[23px] flex-col">
        <button className="flex h-[23px] items-center justify-center bg-white" aria-label="Zoom in">
          <svg width="9" height="9" viewBox="0 0 9 9" stroke="#666" strokeWidth="1.2"><path d="M4.5.3v8.4M.3 4.5h8.4" /></svg>
        </button>
        <button className="flex h-[23px] items-center justify-center bg-white/50" aria-label="Zoom out">
          <svg width="9" height="9" viewBox="0 0 9 9" stroke="#9aa3ad" strokeWidth="1.1"><path d="M.3 4.5h8.4" /></svg>
        </button>
      </div>
      <div className="absolute bottom-0 right-0 flex h-[22px] w-[253px] items-center bg-[#dfe8f1]">
        <span className="ml-[23px] mt-[2px] w-[120px] whitespace-nowrap font-['Open_Sans',sans-serif] text-[8.6px] tracking-[-0.17px] text-[#333]">©2024 OSM ©2024 TomTom</span>
        <svg className="ml-[21px]" width="11" height="11" viewBox="0 0 11 11">
          <path d="M0 0h5.2v5.2H0z" fill="#e0633a" />
          <path d="M5.8 0H11v5.2H5.8z" fill="#86b82c" />
          <path d="M0 5.8h5.2V11H0z" fill="#1c9fe0" />
          <path d="M5.8 5.8H11V11H5.8z" fill="#f5b81c" />
        </svg>
        <span className="ml-[2px] w-[38px] whitespace-nowrap font-['Open_Sans',sans-serif] text-[8.4px] font-semibold tracking-[-0.1px] text-[#6b6f75]">Microsoft</span>
        <span className="ml-[12px] flex h-[14px] w-[15px] items-center justify-center border border-[#7d7f82]">
          <svg width="11" height="11" viewBox="0 0 11 11" fill="none" stroke="#555" strokeWidth="0.8">
            <circle cx="5.5" cy="5.5" r="4.5" />
            <path d="M3.2 6.5a2.5 2.5 0 0 0 4.6 0" />
            <path d="M3.9 3.5v1M7.1 3.5v1" strokeWidth="1" />
          </svg>
        </span>
      </div>
    </div>
  );
}

/* ---------- page ---------- */

export default function App() {
  return (
    <div className="flex h-[511px] w-[1303px] flex-col overflow-hidden border border-black bg-[#f3f2f1]">
      <div className="z-10 flex h-[25px] shrink-0 items-start justify-between bg-white shadow-[0_1px_4px_rgba(0,0,0,0.22)]">
        <div className="ml-[10px] mt-[2px] flex h-[17px] w-[118px] items-center justify-center whitespace-nowrap rounded-full border border-[#d6d5d4] pb-[2px] font-['Noto_Sans_CJK_KR',sans-serif] text-[9.7px] text-[#444]">
          시간 범위:&nbsp;<b className="font-bold text-[#323130]">마지막 24시간</b>
        </div>
        <div className="mr-[17px] mt-[4px] flex h-[14px] items-center font-['Open_Sans',sans-serif] text-[9.6px] text-[#a8a6a4]">
          <svg className="mr-[5px]" width="12" height="11" viewBox="0 0 12 11" fill="none" stroke="#b4b2b0" strokeWidth="0.9">
            <path d="M1.3.8v3.4h3.6" />
            <path d="M1.6 4C3 1.6 6 .9 8.3 2.2a4.2 4.2 0 1 1-6 5.2" />
          </svg>
          Reset
        </div>
      </div>
      <div className="flex min-h-0 flex-1">
        <aside className="flex w-[21px] shrink-0 flex-col items-center border-r border-[#e3e2e1] bg-white pt-[10px]">
          <svg width="6" height="9" viewBox="0 0 6 9" fill="none" stroke="#8a8886" strokeWidth="0.9"><path d="M1 .6 5 4.5 1 8.4" /></svg>
          <p className="mt-[8px] w-[11px] break-all font-['Noto_Sans_CJK_KR',sans-serif] text-[11px] font-medium leading-[12.4px] text-[#323130]">
            페이지
          </p>
        </aside>
        <main className="flex gap-[9px] pl-[11px] pt-[9px]">
          <div className="flex w-[782px] flex-col gap-[9px]">
            <div className="flex justify-end gap-[9px]">
              <Metric title="Impressions" note="20분 전 기준으로" value="7,943" />
              <Metric title="Clicks" note="13분 전 기준으로" value="1,720" />
              <Metric title="Click Through Rate" note="11분 전 기준으로" value="20" />
            </div>
            <Card title="Impressions by Location" note="2분 전 기준으로" className="h-[366px]">
              <MapPanel />
            </Card>
          </div>
          <div className="flex w-[466px] flex-col gap-[8px]">
            <Card title="Impressions by Hour" note="23분 전 기준으로" className="h-[230px]">
              <AreaChart data={impressions} />
            </Card>
            <Card title="Clicks by Hour" note="31분 전 기준으로" className="h-[230px]">
              <AreaChart data={clicks} />
            </Card>
          </div>
        </main>
      </div>
    </div>
  );
}
